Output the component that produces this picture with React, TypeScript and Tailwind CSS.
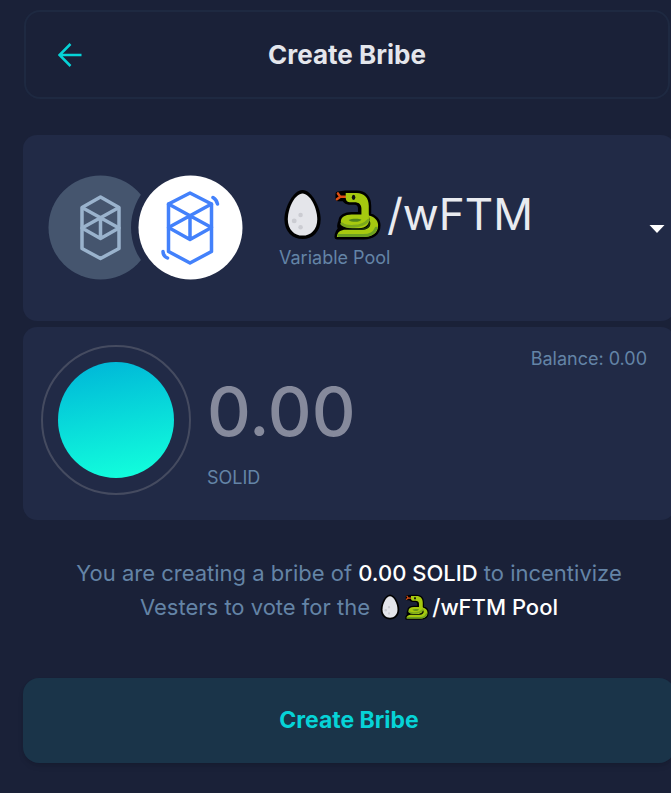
import { useState } from "react";

function EggIcon({ className }: { className: string }) {
  return (
    <svg viewBox="0 0 52 52" className={className} role="img" aria-label="Egg">
      <path
        d="M24 1C33 1 42.500 18 42.500 31C42.500 43.500 34 51 24 51S5.500 43.500 5.500 31C5.500 18 15 1 24 1Z"
        fill="#000"
      />
      <path
        d="M24 4.500C31.500 4.500 39 19 39 31C39 41 32.500 47.500 24 47.500S9 41 9 31C9 19 16.500 4.500 24 4.500Z"
        fill="#e4e5ea"
      />
      <g fill="#cbccd2">
        <circle cx="22" cy="26.500" r="2.300" />
        <circle cx="15.500" cy="32.500" r="2.500" />
        <circle cx="22" cy="39" r="2.300" />
      </g>
    </svg>
  );
}

function SnakeIcon({ className }: { className: string }) {
  return (
    <svg viewBox="0 0 52 52" className={className} role="img" aria-label="Snake" strokeLinejoin="round">
      <g fill="#000" stroke="#000" strokeWidth="5">
        <path d="M14 4H25C33 4 37.500 9 37.500 17V27C43 28 47 32 47 37C47 45 41 49 32 49H5C5 45 6 43 9 41C7 39 8 35 9 33C9 28 14 26 20 26H29V20C29 16 27 13.500 23 13.500H17C14 13.500 13 11 12 10H6V5Z" />
      </g>
      <path
        d="M6 4.500L8.500 8L5 10.500M8.500 8H14"
        fill="none"
        stroke="#dd4f14"
        strokeWidth="2.500"
        strokeLinecap="round"
      />
      <path
        d="M14 4H25C33 4 37.500 9 37.500 17V32H30V20C30 15.500 27 13.500 23 13.500H18C15 13.500 14 11 14 9Z"
        fill="#a6c90f"
      />
      <path
        d="M37.500 27C43 28 47 32 47 37C47 45 41 49 32 49H5C5 44 9 41.500 14 41.500H30C36 41.500 39 39 39 36Z"
        fill="#a6c90f"
      />
      <path d="M30 26H20C13 26 9 29 9 33.500C9 38 14 40 21 40H27C35 40 39 35 37.500 30V26Z" fill="#a6c90f" />
      <path d="M10 35.500C14 39 30 40 37 32" fill="none" stroke="#7ba81c" strokeWidth="3" strokeLinecap="round" />
      <path d="M17 31.500C20 30 27 30 30 31C29 34 20 34.500 17 31.500Z" fill="#51831b" />
      <path
        d="M7 47.500H32C38 47.500 43 45.500 45 40"
        fill="none"
        stroke="#6a9f22"
        strokeWidth="3"
        strokeLinecap="round"
      />
      <path d="M17 41H30C35 41 38 39 38.500 34" fill="none" stroke="#1c3109" strokeWidth="1.500" />
      <ellipse cx="22" cy="8.500" rx="1.800" ry="2.600" fill="#111" />
    </svg>
  );
}

function PoolLogos() {
  return (
    <svg viewBox="0 0 194 104" className="h-[104px] w-[194px] shrink-0 overflow-visible" fill="none" aria-hidden="true">
      <defs>
        <mask id="overlap" maskUnits="userSpaceOnUse" x="-2" y="-2" width="198" height="108">
          <rect x="-2" y="-2" width="198" height="108" fill="#fff" />
          <circle cx="141" cy="51.500" r="59" fill="#000" />
        </mask>
      </defs>
      <circle cx="51.500" cy="51.500" r="52" fill="#45556e" mask="url(#overlap)" />
      <g stroke="#9ab3cd" strokeWidth="3.500" strokeLinejoin="round">
        <path d="M51.500 21L70 31.500V72.500L51.500 82.500L33 72.500V31.500Z" />
        <path d="M33 31.500L70 52L51.500 62.500L33 52L70 31.500M51.500 42V62.500" />
      </g>
      <circle cx="141.500" cy="51.500" r="52" fill="#fff" />
      <g stroke="#4381fb" strokeWidth="3.500" strokeLinejoin="round" strokeLinecap="round">
        <path d="M141 17L162.500 28V75.500L141 87L119.500 75.500V28Z" />
        <path d="M119.500 28L162.500 51.500L141 63.500L119.500 51.500L162.500 28M141 40V63.500" />
        <path d="M164 21.500C166.500 23 168 25 168.500 28M114 75.500C114 78.500 116 81 118.500 82" />
      </g>
    </svg>
  );
}

export default function App() {
  const [amount, setAmount] = useState("");

  return (
    <main className="min-h-screen overflow-x-hidden bg-[#1a2138] pt-[10px] pb-[30px] pl-[23px] font-['Inter',sans-serif]">
      <header className="mr-px ml-px grid h-[89px] grid-cols-[88px_1fr_88px] items-center rounded-2xl border-2 border-[#1e2941]">
        <button type="button" aria-label="Back" className="flex items-center justify-center text-[#06d3d7]">
          <svg viewBox="0 0 24 24" className="size-6" fill="none" stroke="currentColor" strokeWidth="2.500" aria-hidden="true">
            <path d="M12.500 1L1.500 12L12.500 23M1.500 12H23.500" />
          </svg>
        </button>
        <h1 className="text-center text-[26px] font-bold text-[#e4e6ec]">Create Bribe</h1>
      </header>

      <div className="-mr-1">
        <button
          type="button"
          aria-haspopup="listbox"
          className="mt-9 flex h-[186px] w-full items-center rounded-[14px] bg-[#212a46] pr-[10px] pl-[26px] text-left"
        >
          <PoolLogos />
          <span className="ml-9 flex flex-1 flex-col">
            <span className="flex items-center text-[44px] leading-[60px] text-[#e9ebf0]">
              <EggIcon className="size-[51px]" />
              <SnakeIcon className="ml-[2px] size-[51px]" />
              <span className="ml-1">/wFTM</span>
            </span>
            <span className="text-[18px] leading-7 text-[#6484a6]">Variable Pool</span>
          </span>
          <svg viewBox="0 0 16 10" className="h-[10px] w-4" fill="#fff" aria-hidden="true">
            <path d="M0.500 2H15.500L8 10Z" />
          </svg>
        </button>

        <section className="mt-[6px] flex h-[193px] rounded-[14px] bg-[#212a46] pt-[18px] pr-7 pl-[18px]">
          <div className="flex size-[150px] shrink-0 items-center justify-center rounded-full border-2 border-[#454b60]">
            <div className="size-[116px] rounded-full bg-linear-[170deg] from-[#00b8d8] from-5% to-[#12ffdc] to-95%" />
          </div>
          <div className="ml-4 flex min-w-0 flex-1 flex-col pt-[26px]">
            <input
              id="amount"
              type="text"
              inputMode="decimal"
              placeholder="0.00"
              value={amount}
              onChange={(event) => setAmount(event.target.value)}
              className="h-20 w-full bg-transparent text-[68px] leading-20 font-medium text-white outline-none placeholder:text-[#868a9c]"
            />
            <label htmlFor="amount" className="mt-[13px] text-[18px] leading-7 text-[#6484a6]">
              SOLID
            </label>
          </div>
          <p className="shrink-0 text-[18px] leading-7 text-[#6484a6]">Balance: 0.00</p>
        </section>

        <p className="mt-9 text-center text-[22px] leading-[34px] text-[#6484a6]">
          You are creating a bribe of <strong className="font-medium text-white">0.00 SOLID</strong> to incentivize
          <br />
          Vesters to vote for the{" "}
          <strong className="font-medium whitespace-nowrap text-white">
            <EggIcon className="ml-[2px] inline size-[26px] align-[-5px]" />
            <SnakeIcon className="mr-[2px] inline size-[26px] align-[-5px]" />
            /wFTM Pool
          </strong>
        </p>

        <button
          type="button"
          className="mt-[54px] h-[85px] w-full rounded-2xl bg-[#1a3449] text-[23px] font-bold text-[#06d3d7] shadow-md"
        >
          Create Bribe
        </button>
      </div>
    </main>
  );
}
